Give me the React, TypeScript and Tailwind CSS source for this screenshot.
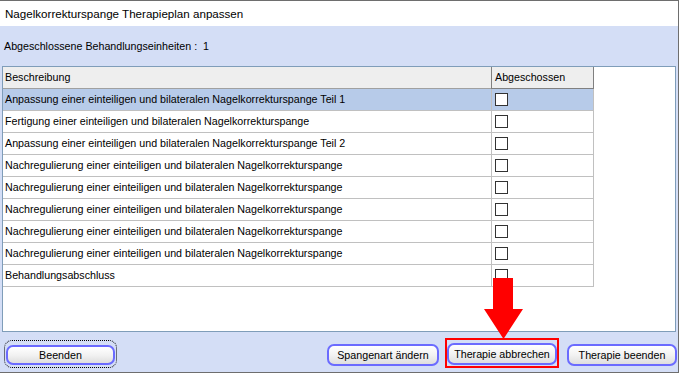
import React from 'react';

const rows = [
  'Anpassung einer einteiligen und bilateralen Nagelkorrekturspange Teil 1',
  'Fertigung einer einteiligen und bilateralen Nagelkorrekturspange',
  'Anpassung einer einteiligen und bilateralen Nagelkorrekturspange Teil 2',
  'Nachregulierung einer einteiligen und bilateralen Nagelkorrekturspange',
  'Nachregulierung einer einteiligen und bilateralen Nagelkorrekturspange',
  'Nachregulierung einer einteiligen und bilateralen Nagelkorrekturspange',
  'Nachregulierung einer einteiligen und bilateralen Nagelkorrekturspange',
  'Nachregulierung einer einteiligen und bilateralen Nagelkorrekturspange',
  'Behandlungsabschluss',
];

function WinButton({ label, width, height }: { label: string; width: string; height: string }) {
  return (
    <button
      className={`${width} ${height} rounded-[7px] border-2 border-[#6b6bff] bg-gradient-to-b from-white via-[#f2f2f2] to-[#dedede] text-[10.7px] text-black leading-none`}
    >
      {label}
    </button>
  );
}

export default function App() {
  return (
    <div
      className="relative w-[680px] h-[374px] bg-white"
      style={{ fontFamily: '"Liberation Sans", Arial, sans-serif' }}
    >
      <div className="w-[679px] h-[373px] border-t border-r border-b border-[#6e6e6e] flex flex-col">
        {/* Title */}
        <div className="h-[25px] bg-white flex items-center pl-[5px] text-[11.6px] text-black">
          Nagelkorrekturspange Therapieplan anpassen
        </div>

        {/* Panel */}
        <div className="flex-1 bg-[#d4def6] flex flex-col">
          <div className="h-[40px] flex items-center pl-[4px] text-[10.7px] text-black whitespace-pre">
            {'Abgeschlossene Behandlungseinheiten :  1'}
          </div>

          {/* Table */}
          <div className="ml-[2px] mr-[2px] h-[266px] border border-[#7f9db9] bg-white">
            <div className="flex h-[22px]">
              <div className="w-[488px] flex items-center pl-[2px] bg-[#eeeeee] border-b border-[#a0a0a0] text-[10.7px] text-black">
                Beschreibung
              </div>
              <div className="w-[103px] flex items-center pl-[3px] bg-[#eeeeee] border-l border-r border-b border-[#808080] text-[10.7px] text-black">
                Abgeschossen
              </div>
            </div>
            {rows.map((r, i) => (
              <div key={i} className="flex h-[22px]">
                <div
                  className={`w-[488px] flex items-center pl-[2px] border-b border-[#c0c0c0] text-[10.7px] text-black whitespace-nowrap ${
                    i === 0 ? 'bg-[#b7cbe9]' : 'bg-white'
                  }`}
                >
                  {r}
                </div>
                <div
                  className={`w-[103px] flex items-center pl-[3px] border-l border-r border-b border-[#c0c0c0] ${
                    i === 0 ? 'bg-[#b7cbe9]' : 'bg-white'
                  }`}
                >
                  <div className="w-[13px] h-[13px] border border-[#333333] bg-white" />
                </div>
              </div>
            ))}
          </div>

          {/* Footer buttons */}
          <div className="flex items-start pt-[8px] pl-[4px]">
            <div className="p-px rounded-[8px] border border-dotted border-black">
              <WinButton label="Beenden" width="w-[109px]" height="h-[20px]" />
            </div>
            <div className="ml-[210px] mt-[2px]">
              <WinButton label="Spangenart ändern" width="w-[112px]" height="h-[22px]" />
            </div>
            <div className="ml-[6px] -mt-[2px] border-2 border-[#ff0000] py-px">
              <WinButton label="Therapie abbrechen" width="w-[110px]" height="h-[22px]" />
            </div>
            <div className="ml-[8px] mt-[2px]">
              <WinButton label="Therapie beenden" width="w-[110px]" height="h-[22px]" />
            </div>
          </div>
        </div>
      </div>

      {/* Red arrow overlay */}
      <svg
        className="absolute left-[484px] top-[278px]"
        width="39"
        height="62"
        viewBox="0 0 39 62"
      >
        <polygon points="9,0 29,0 29,31 39,31 19.5,61 0,31 9,31" fill="#ff0000" />
      </svg>
    </div>
  );
}
